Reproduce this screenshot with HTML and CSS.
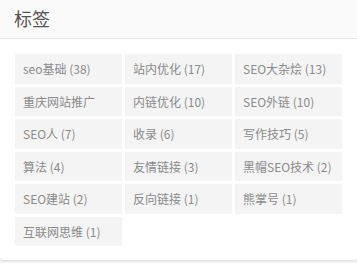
FILE: index.html
```html
<!DOCTYPE html>
<html>
<head>
	<meta charset="utf-8">
	<title>标签</title>
	<link rel="stylesheet" href="styles.css">
</head>
<body>
	<div class="card">
		<div class="card-head"><h3>标签</h3></div>
		<div class="tags">
			<a class="tag">seo基础 (38)</a>
			<a class="tag">站内优化 (17)</a>
			<a class="tag">SEO大杂烩 (13)</a>
			<a class="tag">重庆网站推广</a>
			<a class="tag">内链优化 (10)</a>
			<a class="tag">SEO外链 (10)</a>
			<a class="tag">SEO人 (7)</a>
			<a class="tag">收录 (6)</a>
			<a class="tag">写作技巧 (5)</a>
			<a class="tag">算法 (4)</a>
			<a class="tag">友情链接 (3)</a>
			<a class="tag">黑帽SEO技术 (2)</a>
			<a class="tag">SEO建站 (2)</a>
			<a class="tag">反向链接 (1)</a>
			<a class="tag">熊掌号 (1)</a>
			<a class="tag">互联网思维 (1)</a>
		</div>
	</div>
</body>
</html>
```

FILE: styles.css
```css
*{
	padding: 0;
	margin: 0;
	box-sizing: border-box;
}
body{
	background-color: #f0f0f0;
	font-family: "Noto Sans CJK SC", "Noto Sans", sans-serif;
}
.card{
	background-color: #fff;
	height: 261px;
	border-radius: 0 0 4px 4px;
	border-bottom: 1px solid #e2e2e2;
}
.card-head{
	background-color: #fafafa;
	height: 39px;
	border-bottom: 1px solid #e8e8e8;
	padding-left: 14px;
}
h3{
	font-size: 18px;
	font-weight: normal;
	color: #555;
	line-height: 37px;
}
.tags{
	display: grid;
	grid-template-columns: repeat(3, 107px);
	grid-auto-rows: 29.5px;
	gap: 3px;
	padding: 15px 0 0 15px;
}
.tag{
	background-color: #f4f4f4;
	color: #8a8a8a;
	font-size: 12px;
	line-height: 29.5px;
	padding-left: 8px;
	white-space: nowrap;
	overflow: hidden;
}
```
